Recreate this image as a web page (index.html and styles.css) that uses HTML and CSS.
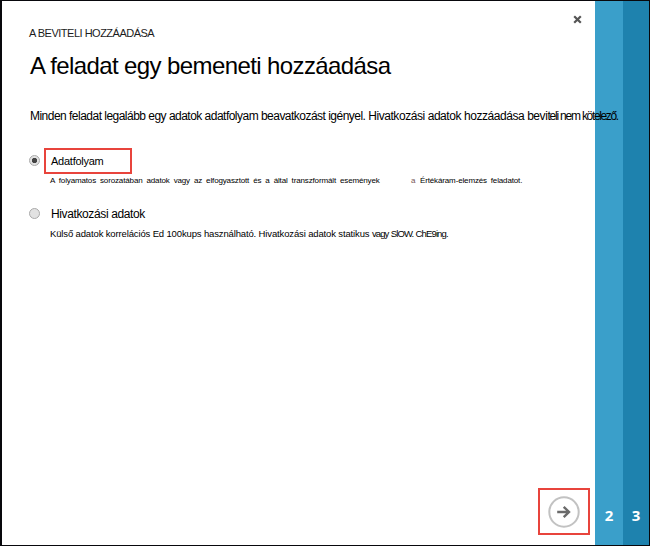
FILE: index.html
```
<!DOCTYPE html>
<html lang="hu">
<head>
<meta charset="utf-8">
<title>A beviteli hozzáadása</title>
<link rel="stylesheet" href="styles.css">
</head>
<body>
<div class="dialog">
  <main class="page">
    <button class="close" aria-label="Bezárás"><svg width="9" height="9" viewBox="0 0 9 9"><path d="M1.2 1.2 7.8 7.8M7.8 1.2 1.2 7.8"/></svg></button>
    <p class="eyebrow">A BEVITELI HOZZÁADÁSA</p>
    <h1 class="title">A feladat egy bemeneti hozzáadása</h1>
    <p class="intro">Minden feladat legalább egy adatok adatfolyam beavatkozást igényel. <span class="loose">Hivatkozási adatok hozzáadása bevi</span><span class="tight">teli nem </span><span class="tighter">kötelező.</span></p>
    <div class="option first">
      <span class="radio checked"></span>
      <div class="label boxed">Adatfolyam</div>
      <p class="hint stream"><span class="lead">A folyamatos sorozatában adatok vagy az elfogyasztott és a által transzformált események</span><span class="article">a</span><span class="rest">Értékáram-elemzés feladatot.</span></p>
    </div>
    <div class="option second">
      <span class="radio"></span>
      <div class="label">Hivatkozási adatok</div>
      <p class="hint">Külső adatok korrelációs Ed 100kups használható. Hivatkozási adatok statikus <span class="tight">vagy SlOW. ChE9ing.</span></p>
    </div>
    <button class="next" aria-label="Tovább"><svg width="32" height="32" viewBox="0 0 32 32"><circle cx="16" cy="16" r="14.7"/><path d="M9.2 16H20.5M15.7 10.8 21 16l-5.3 5.2"/></svg></button>
  </main>
  <div class="step two">2</div>
  <div class="step three">3</div>
</div>
</body>
</html>
```
FILE: styles.css
```
* { box-sizing: border-box; }
body { margin: 0; font-family: "Liberation Sans", Arial, sans-serif; color: #000; }
p, h1 { margin: 0; font-weight: 400; white-space: nowrap; }
button { padding: 0; background: none; border: 0; }
svg { display: block; fill: none; }
.dialog { display: grid; grid-template-columns: 1fr 28px 26px; width: 650px; height: 546px; border: 1px solid #08080c; border-left-width: 2px; background: #fff; }
.page { position: relative; min-width: 0; padding: 25px 0 0 27px; }
.close { position: absolute; top: 14px; right: 13px; }
.close path { stroke: #555; stroke-width: 2.2; }
.eyebrow { height: 14px; font-size: 11px; line-height: 14px; letter-spacing: -0.5px; color: #1c1c1c; }
.title { height: 32px; margin-top: 10px; padding-left: 1px; font-size: 24px; line-height: 32px; letter-spacing: -0.6px; }
.intro { position: relative; z-index: 1; height: 16px; margin-top: 26px; padding-left: 1px; font-size: 12px; line-height: 16px; letter-spacing: -0.52px; }
.loose { letter-spacing: -0.44px; }
.intro .tight { letter-spacing: -1.2px; }
.intro .tighter { letter-spacing: -1.35px; }
.option { display: grid; grid-template-columns: 15px 1fr; align-content: start; }
.first { height: 52px; margin-top: 24px; }
.second { margin-top: 4px; }
.radio { width: 11px; height: 11px; margin-top: 7px; border: 1px solid #aaa; border-radius: 50%; background: #e2e2e2; }
.checked { background: radial-gradient(circle, #444 0 2.3px, #e2e2e2 3px); }
.second .radio { margin-top: 4px; }
.label { width: 110px; height: 20px; padding-left: 7px; font-size: 12px; line-height: 20px; letter-spacing: -0.38px; }
.boxed { width: 88px; height: 26px; padding-left: 5px; border: 2px solid #e8443c; font-size: 11px; line-height: 23px; letter-spacing: -0.25px; }
.hint { grid-column: 2; height: 14px; padding-left: 6px; font-size: 9.5px; line-height: 14px; letter-spacing: -0.14px; }
.second .hint { margin-top: 3px; }
.hint .tight { letter-spacing: -0.87px; word-spacing: 0.5px; }
.stream { display: flex; font-size: 8px; word-spacing: 1.9px; }
.lead { width: 361px; }
.article { width: 9px; color: #755; }
.rest { word-spacing: 1.7px; }
.next { position: absolute; right: 5px; bottom: 10px; display: grid; place-items: center; width: 52px; height: 47px; border: 2px solid #e8443c; }
.next circle { stroke: #c2c2c2; stroke-width: 2; }
.next path { stroke: #6b6b6b; stroke-width: 2.4; }
.step { display: flex; align-items: flex-end; justify-content: center; padding-bottom: 20px; font: 700 15px/20px "Open Sans", sans-serif; color: #fff; }
.two { background: #3a9fca; }
.three { background: #1e82ae; }
```
